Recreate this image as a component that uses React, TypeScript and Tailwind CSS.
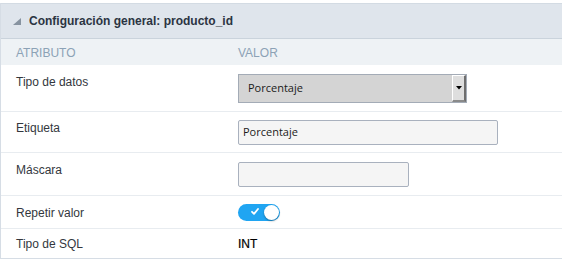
import React from "react";

const font = { fontFamily: '"Liberation Sans", Arial, sans-serif' };
const openSans = { fontFamily: '"Open Sans", "Noto Sans", sans-serif' };

function Row({
  label,
  h,
  lpt,
  vpt,
  children,
  last,
}: {
  label: string;
  h: string;
  lpt: string;
  vpt: string;
  children: React.ReactNode;
  last?: boolean;
}) {
  return (
    <div className={`flex items-start ${h} ${last ? "" : "border-b border-[#e8ecf0]"}`}>
      <div className={`w-[237px] pl-[15px] ${lpt} text-[12px] leading-[16px] text-[#33373d]`}>{label}</div>
      <div className={`flex-1 ${vpt}`}>{children}</div>
    </div>
  );
}

export default function App() {
  return (
    <div className="w-[562px] h-[260px] bg-white pt-[3px]" style={font}>
      <div className="border-l border-b border-[#d6dde5]">
        {/* Header */}
        <div className="h-[36px] bg-[#dfe5ec] border-t border-b border-t-[#d3dbe3] border-b-[#cad3dc] flex items-center pl-[12px]">
          <svg width="8" height="7" viewBox="0 0 8 7" className="mr-[8px] mt-[1px]">
            <polygon points="8,0 8,7 0,7" fill="#8793a0" />
          </svg>
          <span className="text-[12px] font-bold text-[#2b3442]">Configuración general: producto_id</span>
        </div>
        {/* Column header */}
        <div className="h-[26px] bg-[#eef2f5] flex items-center pt-[2px] text-[12px] text-[#8ca2b6]">
          <div className="w-[237px] pl-[15px]">ATRIBUTO</div>
          <div>VALOR</div>
        </div>
        {/* Rows */}
        <Row label="Tipo de datos" h="h-[47px]" lpt="pt-[9px]" vpt="pt-[9px]">
          <div className="w-[229px] h-[29px] border border-[#a3abb6] bg-[#d4d4d4] flex items-stretch">
            <div className="flex-1 flex items-center pl-[9px] text-[11px] text-[#1a1a1a]" style={openSans}>
              Porcentaje
            </div>
            <div className="w-[14px] bg-[#dedede] border-l border-t border-l-white border-t-white border-r-2 border-b-2 border-r-[#6e6e6e] border-b-[#8a8a8a] flex items-center justify-center">
              <svg width="6" height="4" viewBox="0 0 6 4">
                <polygon points="0,0 6,0 3,3.5" fill="#000" />
              </svg>
            </div>
          </div>
        </Row>
        <Row label="Etiqueta" h="h-[41px]" lpt="pt-[8px]" vpt="pt-[8px]">
          <div
            className="w-[260px] h-[25px] border border-[#a9b1be] rounded-[2px] bg-[#f5f5f5] flex items-center pl-[4px] text-[11px] text-[#1a1a1a]"
            style={openSans}
          >
            Porcentaje
          </div>
        </Row>
        <Row label="Máscara" h="h-[43px]" lpt="pt-[9px]" vpt="pt-[9px]">
          <div className="w-[171px] h-[25px] border border-[#a9b1be] rounded-[2px] bg-[#f5f5f5]" />
        </Row>
        <Row label="Repetir valor" h="h-[33px]" lpt="pt-[9px]" vpt="pt-[8px]">
          <div className="relative w-[42px] h-[17px] rounded-full bg-[#20a5f2]">
            <svg width="8" height="7" viewBox="0 0 8 7" className="absolute left-[13px] top-[4px]">
              <path d="M1 3.8 L3 5.8 L7 1" stroke="#fff" strokeWidth="1.8" fill="none" strokeLinecap="round" strokeLinejoin="round" />
            </svg>
            <div className="absolute right-[1px] top-[1px] w-[15px] h-[15px] rounded-full bg-white shadow-[0_1px_2px_rgba(0,0,0,0.35)]" />
          </div>
        </Row>
        <Row label="Tipo de SQL" h="h-[29px]" lpt="pt-[7px]" vpt="pt-[7px]" last>
          <div className="text-[12px] leading-[16px] text-black [-webkit-text-stroke:0.2px_#000]">INT</div>
        </Row>
      </div>
    </div>
  );
}
